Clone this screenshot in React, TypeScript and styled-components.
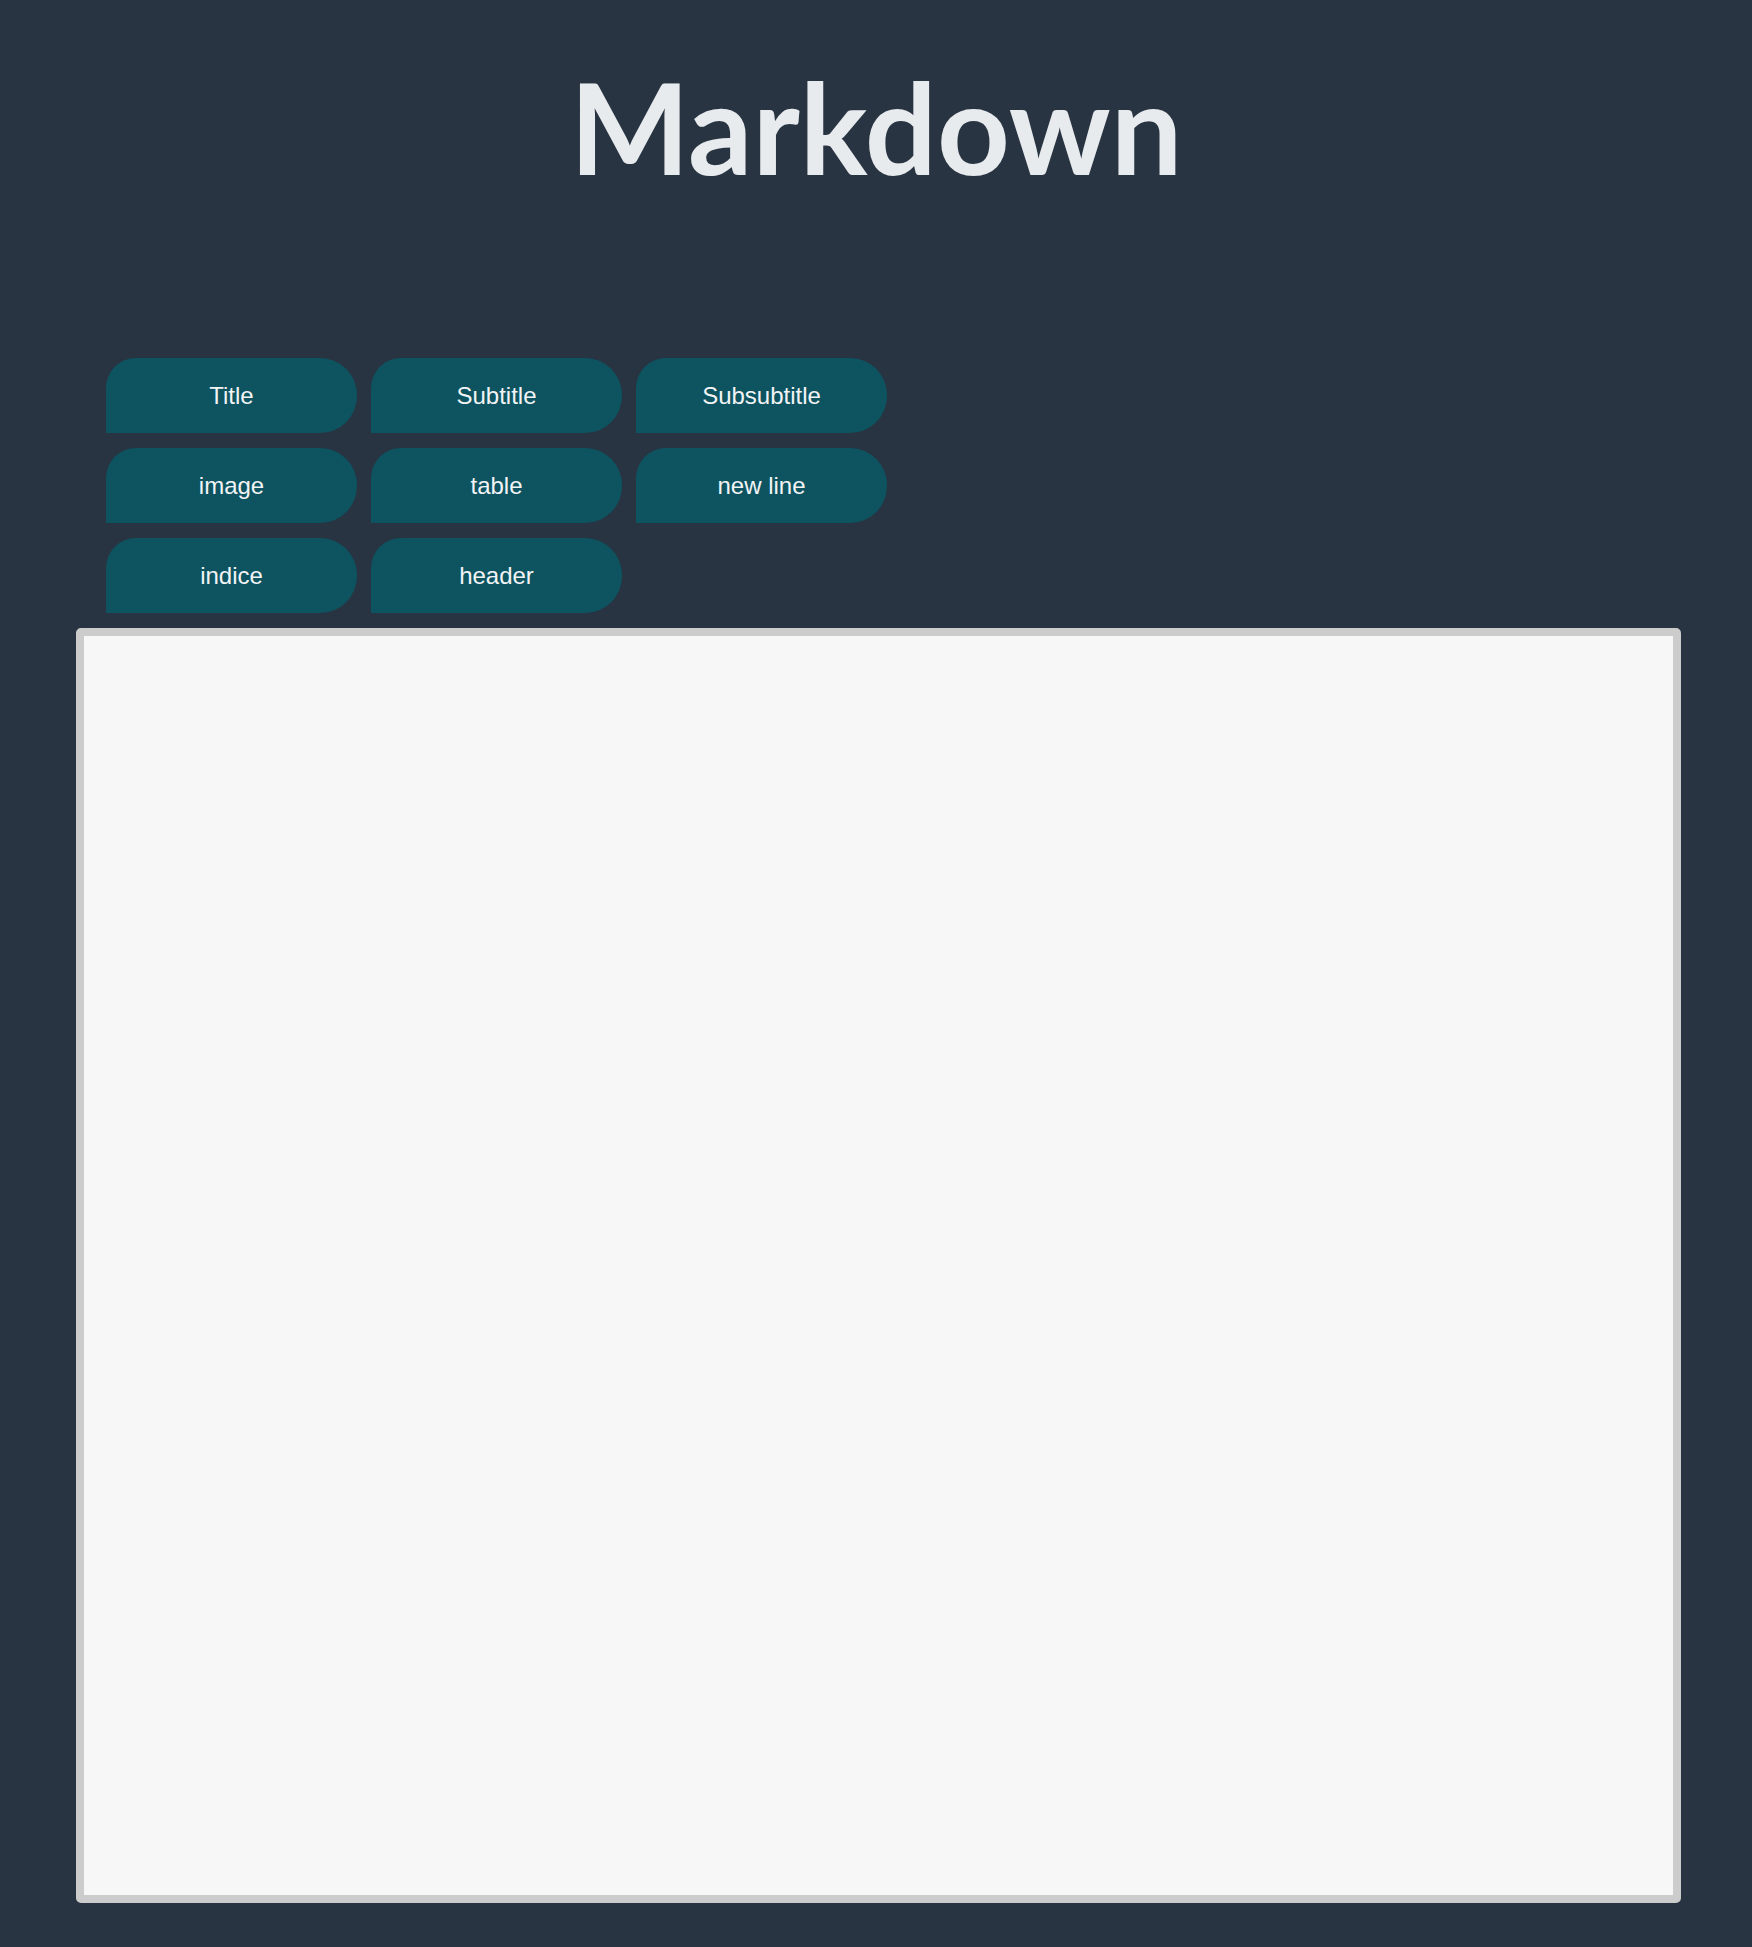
import React from "react"
import styled, { createGlobalStyle } from "styled-components"

const GlobalStyle = createGlobalStyle`
	html, body {
		margin: 0;
		padding: 0;
		background-color: #283442;
	}
	body {
		font-family: "Liberation Sans", Arial, sans-serif;
	}
`

const Page = styled.div`
	min-height: 1947px;
	background-color: #283442;
	padding-top: 46px;
	box-sizing: border-box;
`

const Heading = styled.h1`
	margin: 0;
	text-align: center;
	font-family: Lato, "Open Sans", sans-serif;
	font-weight: 700;
	font-size: 127px;
	line-height: 160px;
	color: #e8ebee;
`

const Toolbar = styled.div`
	display: grid;
	grid-template-columns: repeat(3, 251px);
	column-gap: 14px;
	row-gap: 15px;
	margin: 152px 0 0 106px;
`

const ToolButton = styled.button`
	height: 75px;
	border: none;
	padding: 0;
	background-color: #0d5360;
	color: #f2f4f5;
	font-family: "Liberation Sans", Arial, sans-serif;
	font-size: 24px;
	border-radius: 30px 37px 37px 0;
	cursor: pointer;
	&:hover {
		background-color: #106373;
	}
`

const Editor = styled.textarea`
	display: block;
	box-sizing: border-box;
	width: 1605px;
	height: 1275px;
	margin: 15px 0 0 76px;
	border: 8px solid #cccccc;
	border-radius: 5px;
	background-color: #f7f7f7;
	resize: none;
	outline: none;
	padding: 10px;
	font-family: "Liberation Mono", monospace;
	font-size: 18px;
`

const actions = ["Title", "Subtitle", "Subsubtitle", "image", "table", "new line", "indice", "header"]

const App: React.FC = () => {
	return (
		<>
			<GlobalStyle />
			<Page>
				<Heading>Markdown</Heading>
				<Toolbar>
					{actions.map((label) => (
						<ToolButton key={label}>{label}</ToolButton>
					))}
				</Toolbar>
				<Editor />
			</Page>
		</>
	)
}

export default App
